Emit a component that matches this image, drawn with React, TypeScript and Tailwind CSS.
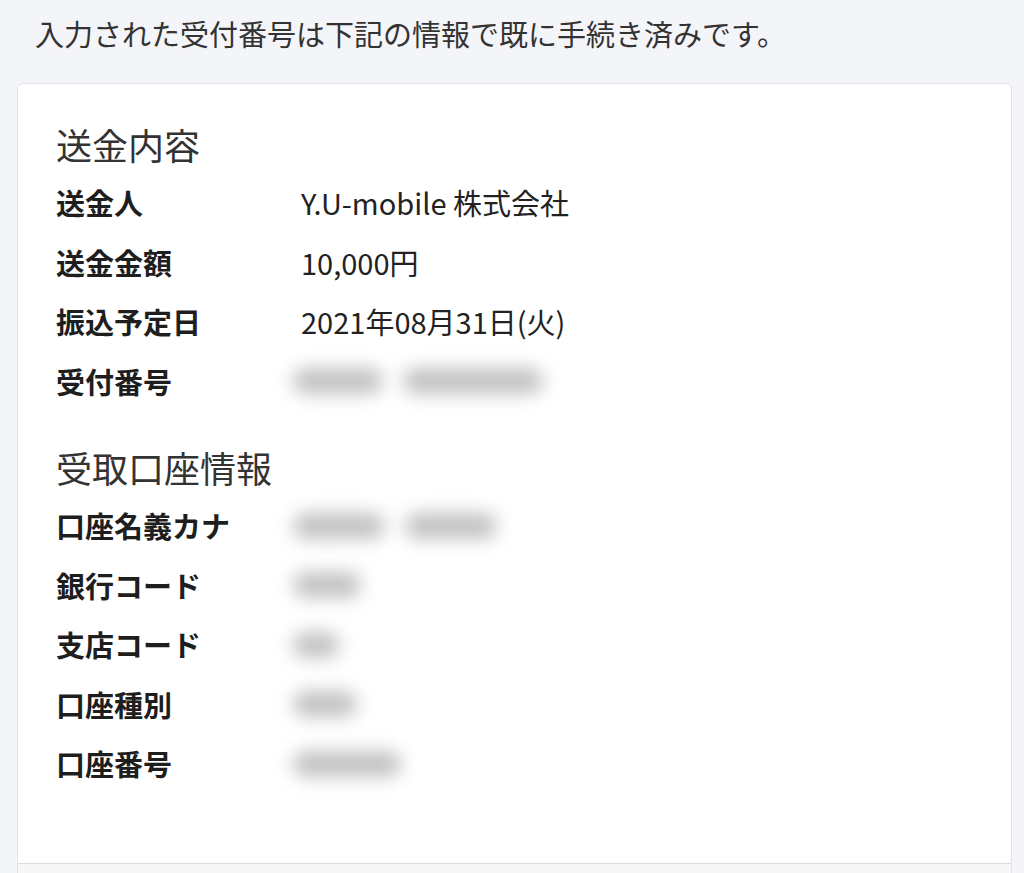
import React from 'react';

const font = { fontFamily: '"Noto Sans CJK JP", "Noto Sans", sans-serif' };

type Row = { label: string; value?: string; blur?: number[] };

const sections: { title: string; rows: Row[] }[] = [
    {
        title: '送金内容',
        rows: [
            { label: '送金人', value: 'Y.U-mobile 株式会社' },
            { label: '送金金額', value: '10,000円' },
            { label: '振込予定日', value: '2021年08月31日(火)' },
            { label: '受付番号', blur: [90, 140] },
        ],
    },
    {
        title: '受取口座情報',
        rows: [
            { label: '口座名義カナ', blur: [92, 92] },
            { label: '銀行コード', blur: [68] },
            { label: '支店コード', blur: [46] },
            { label: '口座種別', blur: [64] },
            { label: '口座番号', blur: [108] },
        ],
    },
];

const Blurred = ({ widths }: { widths: number[] }) => (
    <div className="flex items-center gap-[20px] -ml-[8px]">
        {widths.map((w, i) => (
            <div key={i} className="h-[26px] rounded-full bg-[#c2c2c2] blur-[9px]" style={{ width: w }} />
        ))}
    </div>
);

export default function App() {
    return (
        <div className="min-h-[873px] bg-[#f4f5f8] text-[#1e1e1e] overflow-hidden" style={font}>
            <p className="pt-[12px] pl-[35px] text-[29px] leading-[42px] text-[#333]">
                入力された受付番号は下記の情報で既に手続き済みです。
            </p>
            <div className="ml-[17px] mt-[29px] w-[995px] rounded-[6px] border border-[#e3e4e8] bg-white overflow-hidden">
                <div className="pl-[38px] pt-[31px] pb-[69px]">
                    {sections.map((s, si) => (
                        <div key={s.title} className={si > 0 ? 'mt-[27px]' : ''}>
                            <h5 className="h-[58px] flex items-center text-[36px] text-[#333]">{s.title}</h5>
                            {s.rows.map((r) => (
                                <div key={r.label} className="h-[59.5px] flex items-center">
                                    <div className="w-[245px] text-[29px] font-bold">{r.label}</div>
                                    {r.value ? (
                                        <div className="text-[29px] text-[#222]">{r.value}</div>
                                    ) : (
                                        <Blurred widths={r.blur ?? []} />
                                    )}
                                </div>
                            ))}
                        </div>
                    ))}
                </div>
                <div className="h-[20px] border-t border-[#dcdcdc] bg-[#f7f7f8]" />
            </div>
        </div>
    );
}
